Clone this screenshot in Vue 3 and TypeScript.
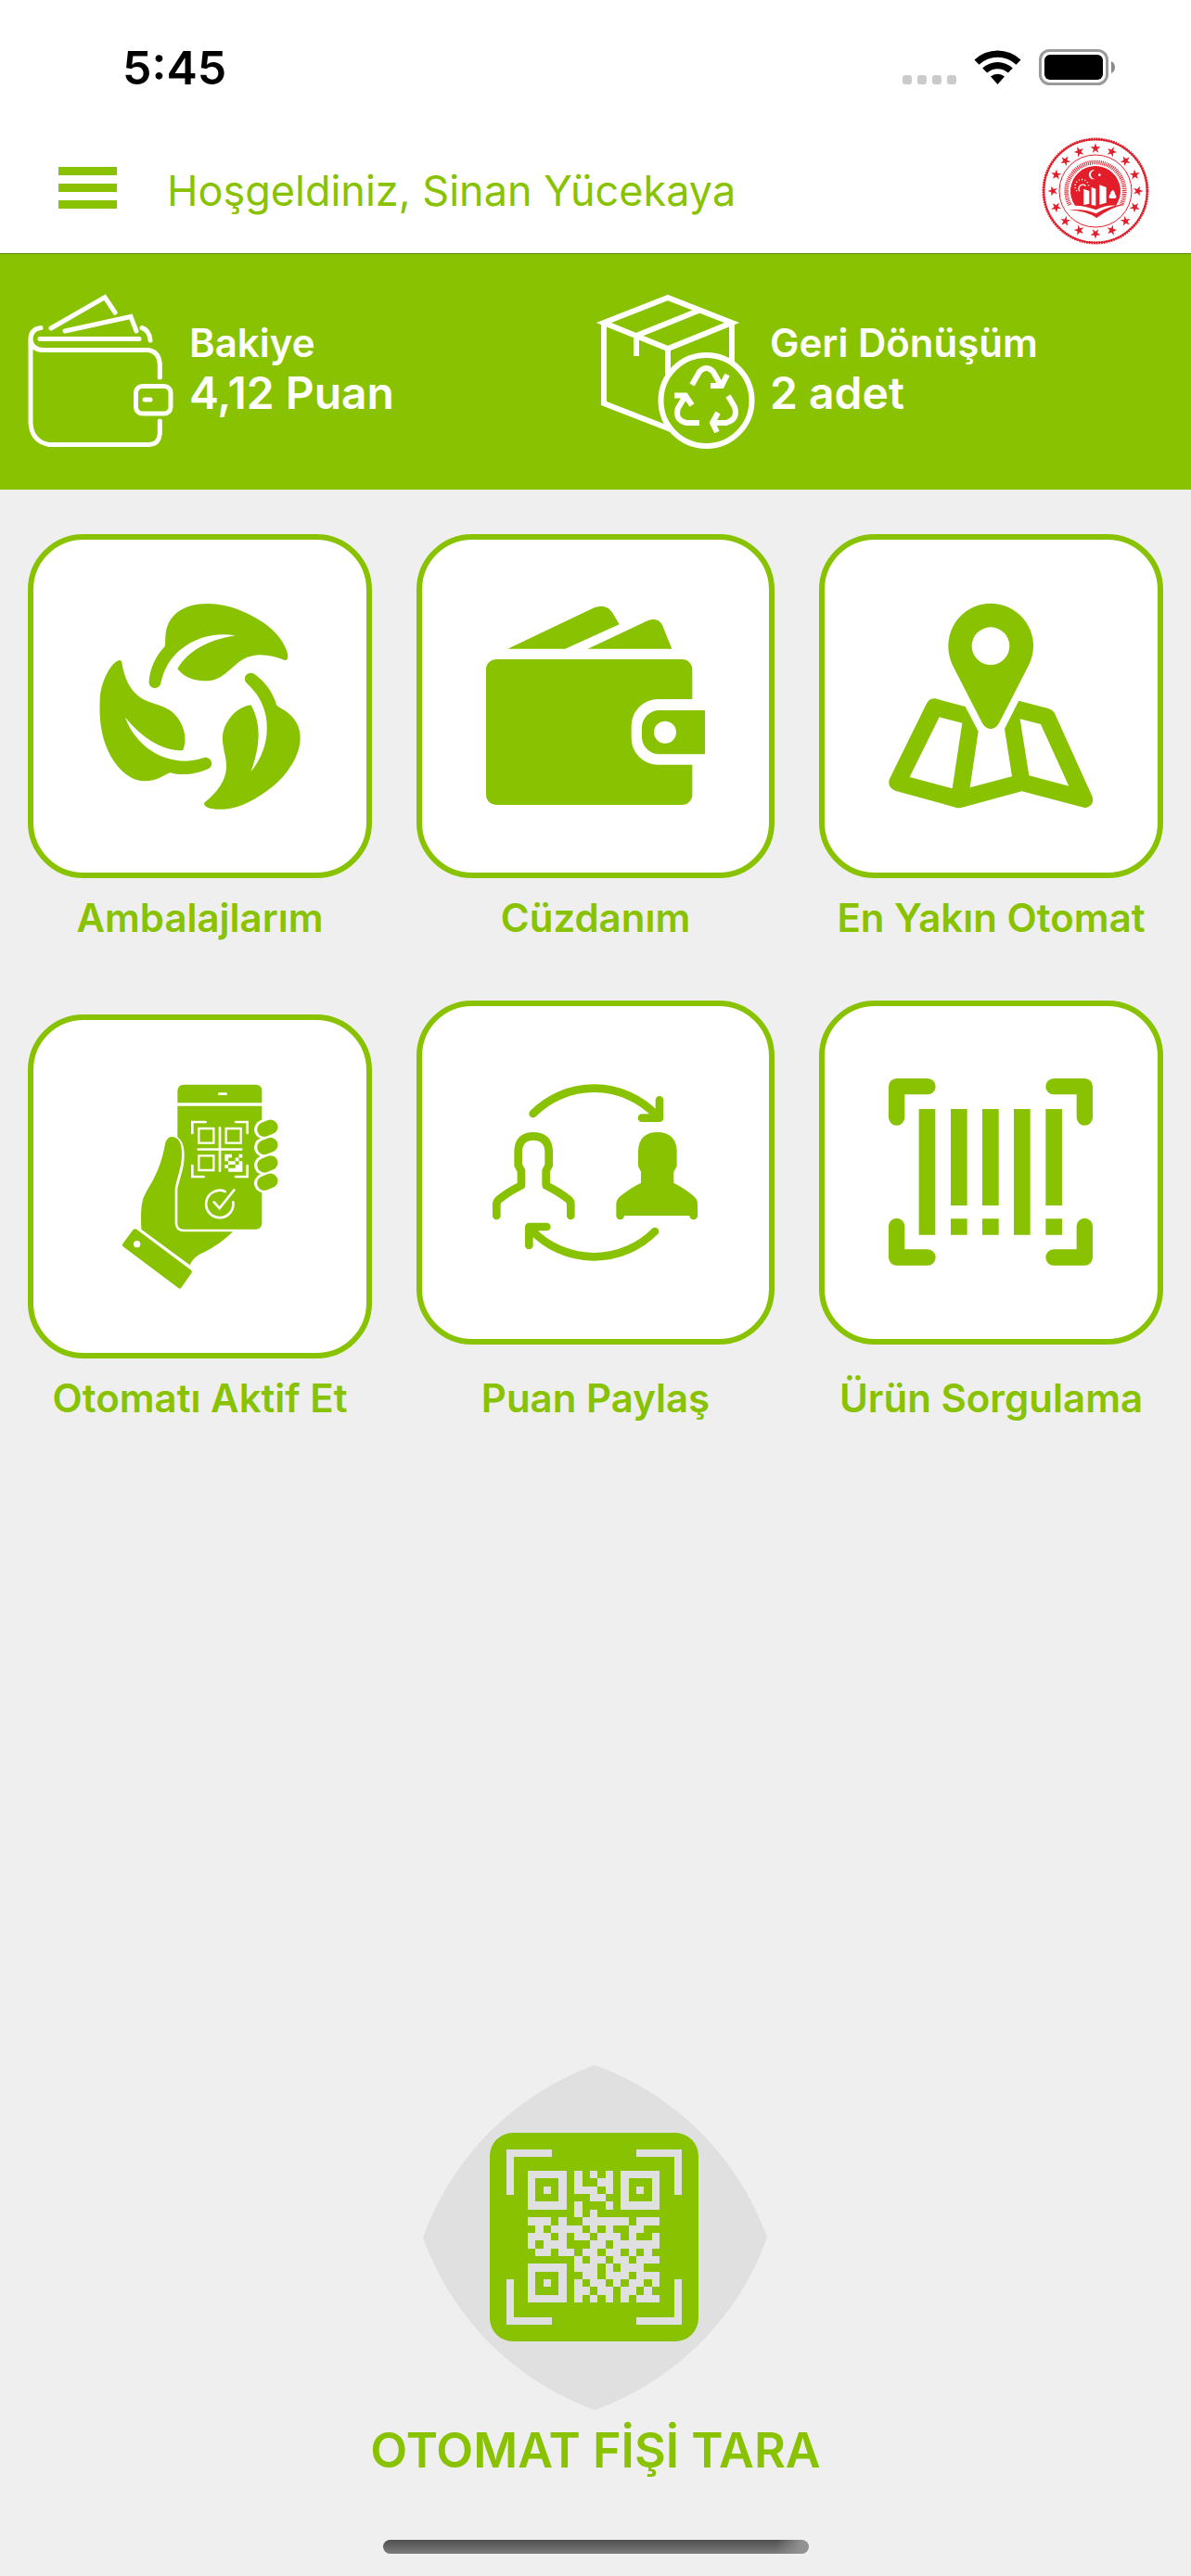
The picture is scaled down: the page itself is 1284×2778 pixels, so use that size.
<script setup lang="ts">
interface Tile {
  id: string
  label: string
  viewBox: string
}

const tiles: Tile[] = [
  { id: 'packages', label: 'Ambalajlarım', viewBox: '227 246 720 720' },
  { id: 'wallet', label: 'Cüzdanım', viewBox: '246 246 720 720' },
  { id: 'nearest', label: 'En Yakın Otomat', viewBox: '237 246 720 720' },
  { id: 'activate', label: 'Otomatı Aktif Et', viewBox: '227 269 720 720' },
  { id: 'share', label: 'Puan Paylaş', viewBox: '246 225 720 720' },
  { id: 'lookup', label: 'Ürün Sorgulama', viewBox: '237 225 720 720' },
]

const leafAngles = [0, 120, 240]
const fingers = [0, 58, 116, 174]
const stars = Array.from({ length: 16 }, (_, i) => i * 22.5)

// One string per module row, 1 = light module
const qrRows = [
  '11111010101011111',
  '10001010011010001',
  '10101011101010101',
  '10001000110010001',
  '11111010001011111',
  '00000010100000000',
  '11101001111110111',
  '01011110101001100',
  '11101011011101001',
  '10111000110111111',
  '01101101101101010',
  '00000010110110111',
  '11111011101011100',
  '10001001101110111',
  '10101010110101101',
  '10001011011011010',
  '11111010101010111',
]

const miniQrRows = ['11001', '10010', '01101', '10011', '01111']

function modulesPath(rows: string[], size: number, x0: number, y0: number): string {
  let d = ''
  rows.forEach((row, r) => {
    for (const run of row.matchAll(/1+/g)) {
      const w = run[0].length * size
      d += `M${x0 + (run.index ?? 0) * size} ${y0 + r * size}h${w}v${size}h${-w}z`
    }
  })
  return d
}

const qrPath = modulesPath(qrRows, 8.36, 41, 41)
const miniQrPath = modulesPath(miniQrRows, 11.4, 666, 523)
</script>

<template>
  <div class="screen">
    <div class="status">
      <span class="time">5:45</span>
      <svg class="status-icons" viewBox="970 51 234 44" aria-hidden="true">
        <g fill="#cbcbcb">
          <rect v-for="i in 4" :key="i" :x="957 + i * 16" y="81" width="10" height="10" rx="3" />
        </g>
        <path d="M1050.500 64.500A36 36 0 0 1 1100.500 64.500L1095.500 69.800A29 29 0 0 0 1055.500 69.800Z" />
        <path d="M1059.200 73.500A24 24 0 0 1 1091.800 73.500L1086.800 78.600A17 17 0 0 0 1064.200 78.600Z" />
        <path d="M1068 82.500A11.500 11.500 0 0 1 1083 82.500L1075.500 91Z" />
        <rect x="1121.500" y="54.500" width="72" height="36" rx="10" fill="none" stroke="#9b9b9b" stroke-width="3" />
        <rect x="1126" y="59" width="63" height="27" rx="6" />
        <path d="M1198 66Q1202 68 1202 72.500Q1202 77 1198 79Z" fill="#8a8a8a" />
      </svg>
    </div>

    <header class="header">
      <button class="menu" type="button" aria-label="Menü">
        <svg viewBox="0 0 63 53" aria-hidden="true">
          <path d="M0 0h63v9H0zM0 18h63v9H0zM0 36h63v9H0z" fill="currentColor" />
        </svg>
      </button>
      <h1 class="welcome">Hoşgeldiniz, Sinan Yücekaya</h1>
      <svg class="emblem" viewBox="664 437 360 360" aria-hidden="true">
        <g fill="none" stroke="#e31e2b">
          <circle cx="844" cy="617" r="167" stroke-width="5" />
          <circle cx="844" cy="617" r="168" stroke-width="9" stroke-dasharray="5 3" />
          <circle cx="844" cy="617" r="117" stroke-width="3" />
          <path d="M761 662A94 94 0 1 1 927 662" stroke-width="14" stroke-dasharray="3 3" />
        </g>
        <g fill="#e31e2b">
          <path
            v-for="a in stars"
            :key="a"
            d="M844 462L848 474H860L850 482L854 494L844 486L834 494L838 482L828 474H840Z"
            :transform="`rotate(${a} 844 617)`"
          />
          <path d="M778 664A81 81 0 1 1 910 664Q874 662 846 678Q812 664 778 664Z" />
          <path d="M757 678Q810 674 846 690Q886 664 941 660Q890 672 848 704Q816 682 757 678Z" />
        </g>
        <g fill="#fff">
          <path d="M843 550A15 15 0 1 0 843 578A14 14 0 1 1 843 550Z" />
          <circle cx="857" cy="565" r="4" />
          <path d="M806 610L824 617V658L806 662ZM831 604L845 610V664L831 662ZM857 597L879 605V655L857 661Z" />
          <path d="M900 613Q907 618 908 628Q915 635 908 641H891Q884 635 891 628Q893 618 900 613Z" />
        </g>
        <path d="M793 618A12 12 0 1 1 813 601" fill="none" stroke="#fff" stroke-width="4" />
        <path d="M784 617A22 22 0 1 1 822 602" fill="none" stroke="#fff" stroke-width="5" stroke-dasharray="3 7" />
      </svg>
    </header>

    <section class="stats">
      <div class="stat stat-balance">
        <svg class="stat-wallet" viewBox="28 56 160 168" aria-hidden="true">
          <g fill="none" stroke="#fff" stroke-width="5" stroke-linecap="round">
            <path d="M33 108V196Q34 216 53 219.500H161Q171 219 172.300 208V194" />
            <path d="M44 93.500Q33 95 33 106Q34 117 46 117.500H160Q171 119 172.300 132V147" />
            <path d="M43 105.500H150" />
            <path d="M55 94L113 60.500L124 77" />
            <path d="M70 97L141 81.500L147 97" />
            <path d="M153 93.500Q161 96 162 107" />
            <rect x="146.500" y="156.500" width="37.500" height="29.500" rx="7" />
            <path d="M156 171H162" />
          </g>
        </svg>
        <div class="stat-text">
          <span class="stat-name">Bakiye</span>
          <strong class="stat-value">4,12 Puan</strong>
        </div>
      </div>
      <div class="stat">
        <svg class="stat-box" viewBox="20 56 172 168" aria-hidden="true">
          <g fill="none" stroke="#fff" stroke-width="6">
            <path d="M98 116V146M167 88V132M29 88V175L101 203" />
            <path d="M29 88L98 61L167 88L98 116ZM64 102L131 75M64 102V124" />
            <circle cx="139.500" cy="172" r="49" />
            <path d="M124 155L132 141Q139.500 133 147 141L155 155M162 144L156 156H144" />
            <path d="M163 167L170 179Q174 192 161 196H147M152 185L146 196L151 206" />
            <path d="M132 196H118Q105 193 109 180L117 167M105 166.500H117L124 177" />
          </g>
        </svg>
        <div class="stat-text">
          <span class="stat-name">Geri Dönüşüm</span>
          <strong class="stat-value">2 adet</strong>
        </div>
      </div>
    </section>

    <main class="tiles">
      <button v-for="tile in tiles" :key="tile.id" type="button" class="tile" :class="`tile-${tile.id}`">
        <span class="card">
          <svg class="tile-icon" :viewBox="tile.viewBox" fill="currentColor" aria-hidden="true">
            <template v-if="tile.id === 'packages'">
              <path
                v-for="a in leafAngles"
                :key="a"
                :transform="`rotate(${a} 598 611)`"
                d="M421 524C424 482 444 440 472 412C474 402 473 395 474 380C478 310 530 273 612 273C680 273 740 302 790 334C835 363 866 410 870 440Q871 458 860 456C810 436 764 432 725 453C680 480 662 523 600 523C562 523 532 508 513 484C550 420 620 390 700 376C640 366 575 378 520 424C482 458 468 492 459 530A19 19 0 0 1 421 524Z"
              />
            </template>
            <template v-else-if="tile.id === 'wallet'">
              <path d="M322 419L602 286Q640 272 660 301L683 340L508 419ZM581 419L775 328Q808 315 822 342L853 419Z" />
              <path d="M286 453H886A33 33 0 0 1 919 486V582H808A86 86 0 0 0 722 668V708A86 86 0 0 0 808 794H919V891A33 33 0 0 1 886 924H286A33 33 0 0 1 252 891V486A33 33 0 0 1 286 453Z" />
              <path fill-rule="evenodd" d="M960 618V760H812A56 56 0 0 1 756 704V674A56 56 0 0 1 812 618ZM831 653A36 36 0 1 0 831 725A36 36 0 1 0 831 653Z" />
            </template>
            <template v-else-if="tile.id === 'nearest'">
              <path fill-rule="evenodd" d="M594 272A138 138 0 0 1 732 410Q732 440 718 470L622 658Q612 678 594 678Q576 678 566 658L470 470Q457 440 457 410A138 138 0 0 1 594 272ZM594 349A61 61 0 1 0 594 471A61 61 0 1 0 594 349Z" />
              <path fill-rule="evenodd" d="M512 606L554 686L527 868L663 832L639 678L685 587L780 612Q796 617 802 630L923 898Q930 928 900 934L695 880L502 932Q491 935 480 932L285 878Q260 868 266 842L386 598Q396 577 415 580ZM428 640L502 659L470 871L332 834ZM689 646L756 663L847 863L718 829Z" />
            </template>
            <template v-else-if="tile.id === 'activate'">
              <path d="M533 298H768Q786 300 786 317V357H513V317Q515 299 533 298Z" />
              <path d="M513 367H786V747Q784 766 767 766H531Q513 764 513 747V635C520 600 535 570 535 530C535 500 530 480 513 468Z" />
              <path d="M493 467C515 466 527 485 527 520C527 570 510 600 505 635V747Q507 772 531 774H692C660 805 630 825 600 840C575 850 560 865 553 882L396 766C394 720 395 680 405 660C425 615 455 590 474 486Q480 468 493 467Z" />
              <path fill-rule="evenodd" d="M370 767Q376 762 382 767L558 899Q562 903 558 908L525 955Q521 960 516 956L337 822Q332 818 336 813ZM382 803A11 11 0 1 0 382 825A11 11 0 1 0 382 803Z" />
              <g fill="none" stroke-linecap="round">
                <path v-for="f in fingers" :key="f" :d="`M792 ${443 + f}L814 ${435 + f}`" stroke="#fff" stroke-width="62" />
                <path v-for="f in fingers" :key="`g${f}`" :d="`M794 ${443 + f}L814 ${435 + f}`" stroke="currentColor" stroke-width="47" />
                <g stroke="#fff" stroke-width="8">
                  <path d="M648 328H670M604 419H561V455M701 419H739V455M561 560V596H598M701 596H739V560" />
                  <path d="M650 437V577M580 507.500H720" />
                  <path d="M667 644A44 44 0 1 0 693 678M631 678L649 698L696 639" />
                </g>
                <path d="M582 440H630V487H582ZM670 440H718V487H670ZM582 528H630V575H582Z" stroke="#fff" stroke-width="7" />
              </g>
              <path :d="miniQrPath" fill="#fff" />
            </template>
            <template v-else-if="tile.id === 'share'">
              <g fill="none" stroke="currentColor" stroke-width="26" stroke-linecap="round" stroke-linejoin="round">
                <path d="M404 393A278 278 0 0 1 802 397M813 349V407H756" />
                <path d="M798 774A278 278 0 0 1 400 770M448 759H391V819" />
                <path d="M286 723V684Q288 674 297 668Q325 645 366 625V578L356 560V515Q358 466 405 466Q453 466 455 515V560L446 578V625Q490 647 517 669Q526 676 526 685V723" />
                <path d="M686 723V684Q688 674 697 668Q725 645 766 625V578L757 560V515Q759 466 806 466Q854 466 856 515V560L846 578V625Q890 647 914 669Q923 676 923 685V723" />
              </g>
              <path d="M686 723V684Q725 645 766 625V578L757 560V515Q759 466 806 466Q854 466 856 515V560L846 578V625Q890 647 923 685V723Z" />
            </template>
            <template v-else>
              <path
                fill="none"
                stroke="currentColor"
                stroke-width="52"
                stroke-linecap="round"
                stroke-linejoin="round"
                d="M290 405V305H390M798 305H898V405M290 757V858H390M798 858H898V757"
              />
              <path d="M362 378h53v407h-53zM669 378h53v407h-53zM465 378h53v312h-53zM465 733h53v52h-53zM567 378h53v312h-53zM567 733h53v52h-53zM772 378h53v312h-53zM772 733h53v52h-53z" />
            </template>
          </svg>
        </span>
        <span class="tile-label">{{ tile.label }}</span>
      </button>
    </main>

    <footer class="footer">
      <button type="button" class="scan">
        <svg class="scan-icon" viewBox="0 0 372 372" aria-hidden="true">
          <path d="M185 0A308 308 0 0 1 371 186A308 308 0 0 1 185 372A308 308 0 0 1 0 186A308 308 0 0 1 185 0Z" fill="#e0e0e0" />
          <g transform="translate(72 73)">
            <rect width="225" height="225" rx="25" fill="#88c200" />
            <path d="M22 67V22H67M158 22H203V67M22 158V203H67M158 203H203V158" fill="none" stroke="#e0e0e0" stroke-width="8" />
            <path :d="qrPath" fill="#e0e0e0" shape-rendering="crispEdges" />
          </g>
        </svg>
        <span class="scan-label">OTOMAT FİŞİ TARA</span>
      </button>
      <div class="home-bar"></div>
    </footer>
  </div>
</template>

<style>
body {
  margin: 0;
  background: #efefef;
}
</style>

<style scoped>
.screen {
  min-height: 100vh;
  display: flex;
  flex-direction: column;
  background: #efefef;
  color: #88c200;
  font-family: Inter, "Liberation Sans", sans-serif;
}

button {
  margin: 0;
  padding: 0;
  border: 0;
  background: none;
  color: inherit;
  font: inherit;
  cursor: pointer;
}

svg {
  display: block;
  flex: none;
}

.status {
  display: flex;
  align-items: center;
  justify-content: space-between;
  height: 146px;
  padding: 0 80px 0 132px;
  background: #fff;
  color: #000;
}

.time {
  font-size: 50px;
  font-weight: 600;
  line-height: 60px;
}

.status-icons {
  width: 234px;
  height: 44px;
}

.header {
  display: flex;
  align-items: center;
  gap: 54px;
  padding: 0 43px 7px 63px;
  border-bottom: 1px solid #5f8700;
  background: #fff;
}

.menu svg {
  width: 63px;
  height: 53px;
}

.welcome {
  flex: 1;
  margin: 0;
  font-size: 45px;
  font-weight: 400;
  line-height: 60px;
}

.emblem {
  width: 120px;
  height: 120px;
}

.stats {
  display: grid;
  grid-template-columns: 1fr 1fr;
  align-items: center;
  padding: 42px 0 44px;
  background: #88c200;
  color: #fff;
}

.stat {
  display: flex;
  align-items: center;
  gap: 16px;
}

.stat-balance {
  padding-left: 28px;
}

.stat-wallet {
  width: 160px;
  height: 168px;
}

.stat-box {
  width: 172px;
  height: 168px;
}

.stat-text {
  display: flex;
  flex-direction: column;
  padding-bottom: 4px;
}

.stat-name {
  font-size: 42px;
  font-weight: 600;
  line-height: 52px;
}

.stat-value {
  font-size: 48px;
  font-weight: 600;
  line-height: 56px;
}

.tiles {
  display: grid;
  grid-template-columns: 371fr 386fr 371fr;
  gap: 64px 48px;
  padding: 48px 30px;
}

.tile {
  display: flex;
  flex-direction: column;
  justify-content: space-between;
  gap: 18px;
}

.tile-activate {
  padding-top: 15px;
}

.card {
  display: flex;
  align-items: center;
  justify-content: center;
  box-sizing: border-box;
  width: 100%;
  height: 371px;
  border: 6px solid #88c200;
  border-radius: 60px;
  background: #fff;
}

.tile-icon {
  width: 240px;
  height: 240px;
}

.tile-label {
  width: 100%;
  font-size: 42px;
  font-weight: 600;
  line-height: 50px;
  text-align: center;
  white-space: nowrap;
}

.footer {
  display: flex;
  flex-direction: column;
  align-items: center;
  gap: 64px;
  margin-top: auto;
  padding-bottom: 24px;
}

.scan {
  display: flex;
  flex-direction: column;
  align-items: center;
  gap: 12px;
}

.scan-icon {
  width: 372px;
  height: 372px;
}

.scan-label {
  font-size: 52px;
  font-weight: 600;
  line-height: 64px;
}

.home-bar {
  width: 459px;
  height: 15px;
  border-radius: 8px;
  background:
    linear-gradient(100deg, transparent 92%, #929292 98%),
    linear-gradient(#4f4f4f, #7c7c7c);
}
</style>
